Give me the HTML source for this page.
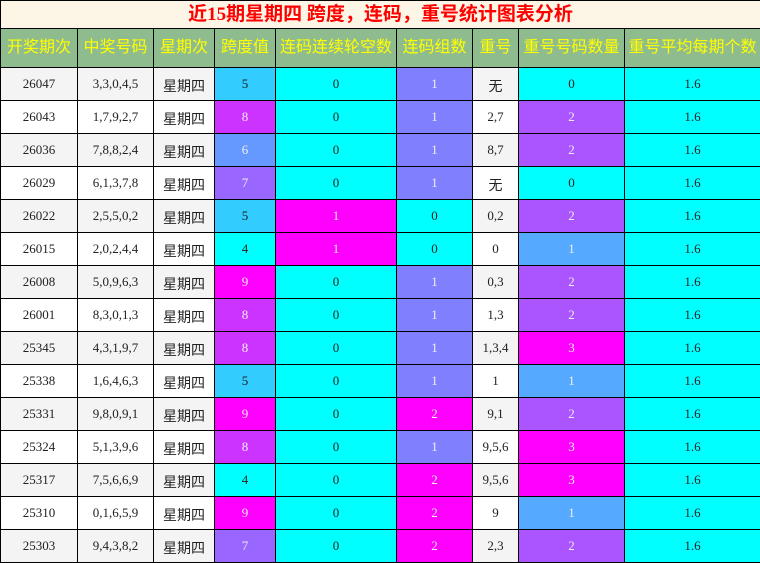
<!DOCTYPE html>
<html><head><meta charset="utf-8"><style>
body{margin:0;background:#fff;font-family:"Liberation Serif","Noto Serif CJK SC",serif;}
table{border-collapse:collapse;table-layout:fixed;width:760px;}
td{border:1px solid #000;text-align:center;padding:0;font-size:13px;color:#222;height:32px;line-height:16px;overflow:hidden;white-space:nowrap;}
.t td{height:27px;line-height:22px;background:#fdf5e6;color:#ff0000;font-weight:bold;font-size:19px;font-family:"Liberation Serif","Noto Sans CJK SC",sans-serif;}
.h td{height:38px;line-height:20px;background:#8fbc8f;color:#ffff00;font-size:16px;font-family:"Liberation Sans","Noto Sans CJK SC",sans-serif;}
.w{font-family:"Liberation Sans","Noto Sans CJK SC",sans-serif;font-size:14px;}
.w span{position:relative;top:2px;}
tr.a td.g{background:#f4f4f4}
.c{background:#00ffff}
.lb{background:#33ccff}.pu{background:#cc33ff;color:#eee}.bl{background:#6699ff;color:#eee}.vi{background:#9966ff;color:#eee}.mg{background:#ff00ff;color:#eee}
.l1{background:#8080ff;color:#eee}.r2{background:#aa55ff;color:#eee}.r1{background:#55aaff;color:#eee}
</style></head><body>
<table>
<colgroup><col style="width:77px"><col style="width:76px"><col style="width:61px"><col style="width:61px"><col style="width:121px"><col style="width:76px"><col style="width:46px"><col style="width:106px"><col style="width:136px"></colgroup>
<tr class="t"><td colspan="9">近15期星期四 跨度，连码，重号统计图表分析</td></tr>
<tr class="h"><td>开奖期次</td><td>中奖号码</td><td>星期次</td><td>跨度值</td><td>连码连续轮空数</td><td>连码组数</td><td>重号</td><td>重号号码数量</td><td>重号平均每期个数</td></tr>
<tr class="a"><td class="g">26047</td><td class="g">3,3,0,4,5</td><td class="g w"><span>星期四</span></td><td class="lb">5</td><td class="c">0</td><td class="l1">1</td><td class="g w"><span>无</span></td><td class="c">0</td><td class="c">1.6</td></tr>
<tr><td class="g">26043</td><td class="g">1,7,9,2,7</td><td class="g w"><span>星期四</span></td><td class="pu">8</td><td class="c">0</td><td class="l1">1</td><td class="g">2,7</td><td class="r2">2</td><td class="c">1.6</td></tr>
<tr class="a"><td class="g">26036</td><td class="g">7,8,8,2,4</td><td class="g w"><span>星期四</span></td><td class="bl">6</td><td class="c">0</td><td class="l1">1</td><td class="g">8,7</td><td class="r2">2</td><td class="c">1.6</td></tr>
<tr><td class="g">26029</td><td class="g">6,1,3,7,8</td><td class="g w"><span>星期四</span></td><td class="vi">7</td><td class="c">0</td><td class="l1">1</td><td class="g w"><span>无</span></td><td class="c">0</td><td class="c">1.6</td></tr>
<tr class="a"><td class="g">26022</td><td class="g">2,5,5,0,2</td><td class="g w"><span>星期四</span></td><td class="lb">5</td><td class="mg">1</td><td class="c">0</td><td class="g">0,2</td><td class="r2">2</td><td class="c">1.6</td></tr>
<tr><td class="g">26015</td><td class="g">2,0,2,4,4</td><td class="g w"><span>星期四</span></td><td class="c">4</td><td class="mg">1</td><td class="c">0</td><td class="g">0</td><td class="r1">1</td><td class="c">1.6</td></tr>
<tr class="a"><td class="g">26008</td><td class="g">5,0,9,6,3</td><td class="g w"><span>星期四</span></td><td class="mg">9</td><td class="c">0</td><td class="l1">1</td><td class="g">0,3</td><td class="r2">2</td><td class="c">1.6</td></tr>
<tr><td class="g">26001</td><td class="g">8,3,0,1,3</td><td class="g w"><span>星期四</span></td><td class="pu">8</td><td class="c">0</td><td class="l1">1</td><td class="g">1,3</td><td class="r2">2</td><td class="c">1.6</td></tr>
<tr class="a"><td class="g">25345</td><td class="g">4,3,1,9,7</td><td class="g w"><span>星期四</span></td><td class="pu">8</td><td class="c">0</td><td class="l1">1</td><td class="g">1,3,4</td><td class="mg">3</td><td class="c">1.6</td></tr>
<tr><td class="g">25338</td><td class="g">1,6,4,6,3</td><td class="g w"><span>星期四</span></td><td class="lb">5</td><td class="c">0</td><td class="l1">1</td><td class="g">1</td><td class="r1">1</td><td class="c">1.6</td></tr>
<tr class="a"><td class="g">25331</td><td class="g">9,8,0,9,1</td><td class="g w"><span>星期四</span></td><td class="mg">9</td><td class="c">0</td><td class="mg">2</td><td class="g">9,1</td><td class="r2">2</td><td class="c">1.6</td></tr>
<tr><td class="g">25324</td><td class="g">5,1,3,9,6</td><td class="g w"><span>星期四</span></td><td class="pu">8</td><td class="c">0</td><td class="l1">1</td><td class="g">9,5,6</td><td class="mg">3</td><td class="c">1.6</td></tr>
<tr class="a"><td class="g">25317</td><td class="g">7,5,6,6,9</td><td class="g w"><span>星期四</span></td><td class="c">4</td><td class="c">0</td><td class="mg">2</td><td class="g">9,5,6</td><td class="mg">3</td><td class="c">1.6</td></tr>
<tr><td class="g">25310</td><td class="g">0,1,6,5,9</td><td class="g w"><span>星期四</span></td><td class="mg">9</td><td class="c">0</td><td class="mg">2</td><td class="g">9</td><td class="r1">1</td><td class="c">1.6</td></tr>
<tr class="a"><td class="g">25303</td><td class="g">9,4,3,8,2</td><td class="g w"><span>星期四</span></td><td class="vi">7</td><td class="c">0</td><td class="mg">2</td><td class="g">2,3</td><td class="r2">2</td><td class="c">1.6</td></tr>
</table>
</body></html>
